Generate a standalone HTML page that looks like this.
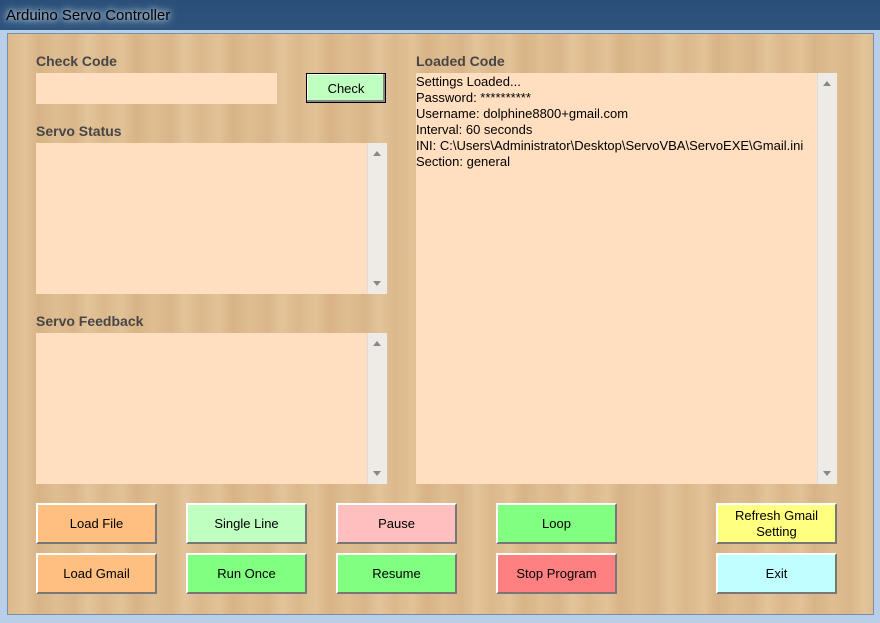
<!DOCTYPE html>
<html><head><style>
body{margin:0;width:880px;height:623px;overflow:hidden;font-family:"Liberation Sans",sans-serif;background:linear-gradient(180deg,#2a4f78 0,#4f7fae 50%,#9fc0e0 100%);position:relative}
.title{position:absolute;left:6px;top:7px;font-size:15px;color:#000;text-shadow:0 0 6px #e0ecf8,0 0 10px #e0ecf8}
.frame{position:absolute;left:0;top:30px;width:880px;height:593px;background:#b7cfe8}
.wood{position:absolute;left:7px;top:33px;width:865px;height:580px;border:1px solid #7a8ea6;
background:repeating-linear-gradient(90deg,#dcb98d 0,#e2c297 17px,#d8b386 31px,#dfbe92 48px,#dab58a 66px,#e3c49a 80px,#dbb78b 97px);}
.lbl{position:absolute;font-size:14px;font-weight:bold;color:#464646}
.box{position:absolute;background:#ffdfbf}
.sb{position:absolute;right:0;top:0;bottom:0;width:19px;background:#eeeae6;border-left:1px solid #ddd}
.sb:before{content:"";position:absolute;left:5px;top:8px;border:4px solid transparent;border-bottom:5px solid #888;border-top:0}
.sb:after{content:"";position:absolute;left:5px;bottom:8px;border:4px solid transparent;border-top:5px solid #888;border-bottom:0}
.btn{position:absolute;width:117px;height:37px;border:2px solid;border-color:#fff #777 #777 #fff;font-size:13px;display:flex;align-items:center;justify-content:center;text-align:center;line-height:16px}
.txt{font-size:13px;line-height:16px;padding:1px 0 0 0;white-space:nowrap;color:#000}
</style></head><body>
<div class="title">Arduino Servo Controller</div>
<div class="frame"></div>
<div class="wood"></div>
<div class="lbl" style="left:36px;top:53px">Check Code</div>
<div class="box" style="left:36px;top:73px;width:241px;height:31px"></div>
<div style="position:absolute;left:306px;top:73px;width:78px;height:28px;border:1px solid #000;background:#bfffbf;font-size:13px;display:flex;align-items:center;justify-content:center;box-shadow:inset -2px -2px 0 #888,inset 1px 1px 0 #fff">Check</div>
<div class="lbl" style="left:36px;top:123px">Servo Status</div>
<div class="box" style="left:36px;top:143px;width:351px;height:151px"><div class="sb"></div></div>
<div class="lbl" style="left:36px;top:313px">Servo Feedback</div>
<div class="box" style="left:36px;top:333px;width:351px;height:151px"><div class="sb"></div></div>
<div class="lbl" style="left:416px;top:53px">Loaded Code</div>
<div class="box txt" style="left:416px;top:73px;width:421px;height:410px;overflow:hidden"><div class="sb"></div>Settings Loaded...<br>Password: **********<br>Username: dolphine8800+gmail.com<br>Interval: 60 seconds<br>INI: C:\Users\Administrator\Desktop\ServoVBA\ServoEXE\Gmail.ini<br>Section: general</div>
<div class="btn" style="left:36px;top:503px;background:#ffbf80">Load File</div>
<div class="btn" style="left:186px;top:503px;background:#bfffbf">Single Line</div>
<div class="btn" style="left:336px;top:503px;background:#ffbfbf">Pause</div>
<div class="btn" style="left:496px;top:503px;background:#80ff80">Loop</div>
<div class="btn" style="left:716px;top:503px;background:#ffff80">Refresh Gmail<br>Setting</div>
<div class="btn" style="left:36px;top:553px;background:#ffbf80">Load Gmail</div>
<div class="btn" style="left:186px;top:553px;background:#80ff80">Run Once</div>
<div class="btn" style="left:336px;top:553px;background:#80ff80">Resume</div>
<div class="btn" style="left:496px;top:553px;background:#ff8080">Stop Program</div>
<div class="btn" style="left:716px;top:553px;background:#bfffff">Exit</div>
</body></html>
